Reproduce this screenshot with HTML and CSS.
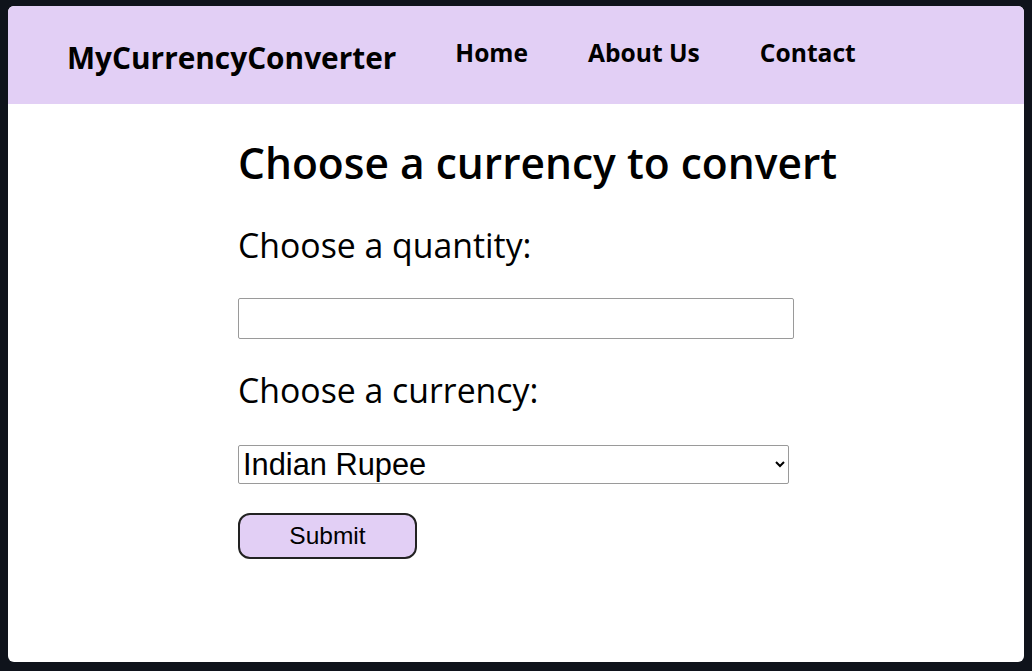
FILE: index.html
```html
<!DOCTYPE html>
<html>
<head>
<meta charset="utf-8">
<link rel="stylesheet" href="styles.css">
</head>
<body>
<div class="page">
  <header class="header">
    <div class="logo">MyCurrencyConverter</div>
    <nav class="nav">
      <a href="#">Home</a>
      <a href="#">About Us</a>
      <a href="#">Contact</a>
    </nav>
  </header>
  <main class="main">
    <h1 class="title">Choose a currency to convert</h1>
    <form class="form">
      <label class="label label-qty" for="qty">Choose a quantity:</label>
      <input class="qty" id="qty" type="text">
      <label class="label label-cur" for="cur">Choose a currency:</label>
      <select class="cur" id="cur">
        <option>Indian Rupee</option>
        <option>US Dollar</option>
        <option>Euro</option>
      </select>
      <button class="submit" type="button">Submit</button>
    </form>
  </main>
</div>
</body>
</html>
```
FILE: styles.css
```css
html { background: #0f131b; }
body { margin: 6px 8px 9px 8px; }
.page {
  background: #ffffff;
  border-radius: 6px;
  height: 656px;
  overflow: hidden;
}
.header {
  background: #e2cff5;
  height: 98px;
  display: flex;
  align-items: center;
  padding-left: 59px;
  font-family: "Open Sans", sans-serif;
  font-weight: 700;
  color: #000;
}
.logo { font-size: 29.8px; margin-top: 4px; }
.nav { display: flex; gap: 60px; margin-left: 59px; margin-bottom: 5px; }
.nav a { color: #000; text-decoration: none; font-size: 24.6px; }
.main { padding-left: 230px; padding-top: 37px; }
.title {
  margin: 0;
  font-family: "Open Sans", sans-serif;
  font-weight: 600;
  font-size: 42.5px;
  line-height: 44px;
}
.form { display: flex; flex-direction: column; align-items: flex-start; }
.label {
  font-family: "Open Sans", sans-serif;
  font-size: 33.8px;
  line-height: 41px;
}
.label-qty { margin-top: 40px; margin-bottom: 32px; }
.label-cur { margin-top: 31px; margin-bottom: 34px; }
.qty {
  width: 556px;
  height: 41px;
  box-sizing: border-box;
  border: 1px solid #9a9a9a;
  border-radius: 2px;
  margin: 0;
}
.cur {
  width: 551px;
  height: 39px;
  box-sizing: border-box;
  font-family: "Liberation Sans", Arial, sans-serif;
  font-size: 30.8px;
  padding: 0;
  border: 1px solid #9a9a9a;
  border-radius: 2px;
  background: #fff;
  margin: 0;
}
.submit {
  margin-top: 29px;
  width: 179px;
  height: 46px;
  background: #e2cff5;
  border: 2px solid #222;
  border-radius: 12px;
  font-family: "Liberation Sans", Arial, sans-serif;
  font-size: 24.5px;
  color: #000;
}
```
